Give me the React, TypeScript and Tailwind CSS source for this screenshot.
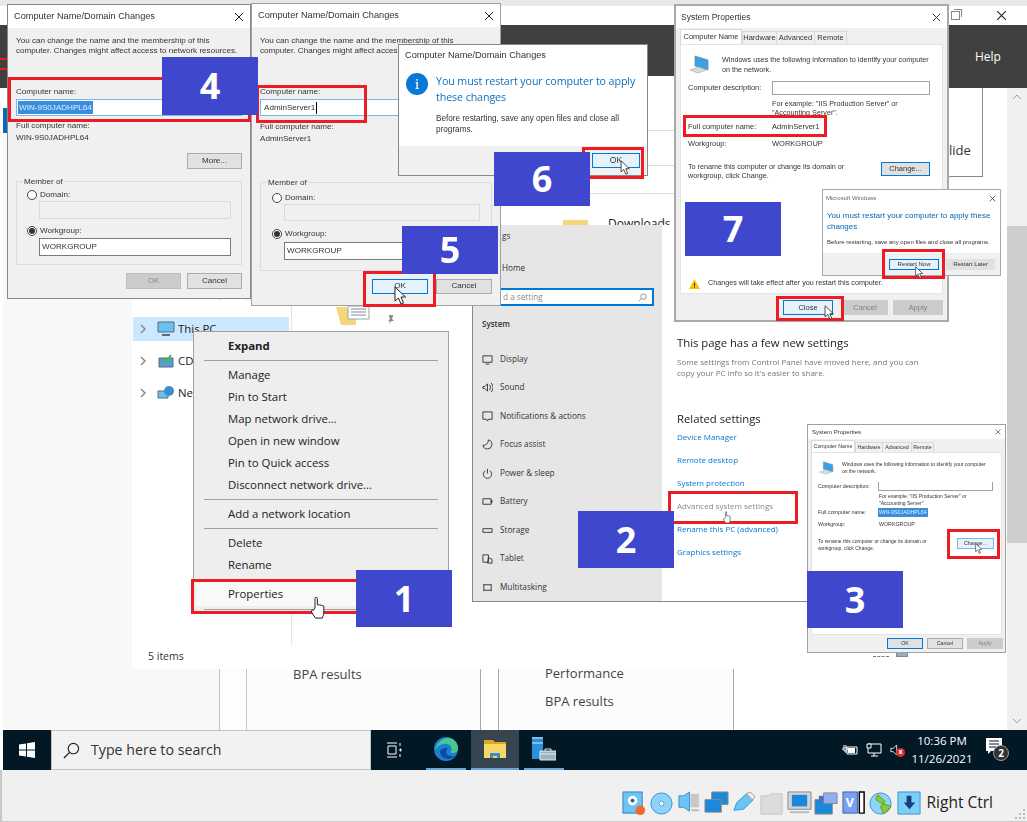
import React from "react";

const RED = "absolute border-[3px] border-[#ed1c24] z-20";
const DLG = "font-['Liberation_Sans',sans-serif] whitespace-nowrap blur-[0.3px]";

function Tag({ n, className }: { n: string; className: string }) {
  return (
    <div className={`absolute z-30 w-[96px] bg-[#3f48cc] flex items-center justify-center text-white font-bold text-[36px] ${className}`}>
      {n}
    </div>
  );
}

function Arrow({ className }: { className: string }) {
  return (
    <svg viewBox="0 0 12 19" className={`absolute z-40 ${className}`}>
      <path d="M1 1v14l3.5-3 2.5 6 2.5-1-2.5-6h4.5z" fill="#fff" stroke="#222" strokeWidth="1" />
    </svg>
  );
}

function Hand({ className }: { className: string }) {
  return (
    <svg viewBox="0 0 16 24" className={`absolute z-40 ${className}`}>
      <path d="M5 12V2.5a1.2 1.2 0 0 1 2.4 0V9l1-.2 1.5.2 1.5.3 2.4.8v6c0 2-1 5-1.5 6H5.5L1.5 16c-.6-1.5.5-2.5 1.8-1.5z" fill="#fff" stroke="#222" strokeWidth="1" />
    </svg>
  );
}

function Btn({ label, className }: { label: string; className: string }) {
  return <div className={`flex items-center justify-center border ${className}`}>{label}</div>;
}

function Radio({ on }: { on?: boolean }) {
  return (
    <span className="w-[10px] h-[10px] rounded-full border border-[#444] bg-white flex items-center justify-center shrink-0">
      {on && <span className="w-[6px] h-[6px] rounded-full bg-[#333]" />}
    </span>
  );
}

function CloseX({ className }: { className: string }) {
  return (
    <svg viewBox="0 0 10 10" className={className}>
      <path d="M1 1l8 8M9 1l-8 8" stroke="#222" strokeWidth="1" fill="none" />
    </svg>
  );
}

function ChangeDialog({ second }: { second?: boolean }) {
  const name = second ? "AdminServer1" : "WIN-9S0JADHPL64";
  return (
    <div
      className={
        second
          ? `absolute left-[251px] top-[3px] w-[250px] h-[303px] z-[11] bg-[#f0f0f0] border border-[#a0a0a0] text-[8.1px] text-[#333] flex flex-col ${DLG}`
          : `absolute left-[7px] top-[4px] w-[244px] h-[295px] z-10 bg-[#f0f0f0] border border-[#888] text-[8.1px] text-[#333] flex flex-col ${DLG}`
      }
    >
      <div className="h-[23px] bg-white flex items-center justify-between pl-[6px] pr-[6px] text-[9.2px] shrink-0">
        <span>Computer Name/Domain Changes</span>
        <CloseX className="w-[10px] h-[10px]" />
      </div>
      <div className="flex flex-col px-[8px] flex-1">
        <div className={second ? "mt-[9px] leading-[10px]" : "mt-[8px] leading-[10px]"}>
          You can change the name and the membership of this
          <br />
          computer. Changes might affect access to network resources.
        </div>
        <div className="mt-[30px] leading-[12px]">Computer name:</div>
        <div className="mt-[1px] h-[17px] bg-white border border-[#7eb4ea] flex items-center pl-[1px] shrink-0">
          {second ? (
            <span className="ml-[2px] pr-[1px] border-r border-black leading-[12px]">{name}</span>
          ) : (
            <span className="bg-[#3a8fdc] text-[#dfeeff] px-[1px] leading-[13px]">{name}</span>
          )}
        </div>
        <div className={second ? "mt-[5px] leading-[12px]" : "mt-[4px] leading-[12px]"}>Full computer name:</div>
        <div className="leading-[12px]">{name}</div>
        <Btn label="More..." className="mt-[9px] self-end w-[55px] h-[16px] bg-[#e1e1e1] border-[#adadad]" />
        <div
          className={
            second
              ? "relative mt-[12px] border border-[#dcdcdc] flex flex-col pl-[11px] pr-[11px] pt-[9px] pb-[10px]"
              : "relative mt-[12px] border border-[#dcdcdc] flex flex-col pl-[10px] pr-[10px] pt-[7px] pb-[8px]"
          }
        >
          <span className="absolute left-[6px] -top-[6px] bg-[#f0f0f0] px-[1px] leading-[12px]">Member of</span>
          <div className="flex items-center gap-[3px] h-[12px]">
            <Radio />
            <span>Domain:</span>
          </div>
          <div className={second ? "ml-[12px] h-[17px] bg-[#f0f0f0] border border-[#d9d9d9]" : "ml-[12px] h-[18px] bg-[#f0f0f0] border border-[#d9d9d9]"} />
          <div className={second ? "mt-[7px] flex items-center gap-[3px] h-[12px]" : "mt-[6px] flex items-center gap-[3px] h-[12px]"}>
            <Radio on />
            <span>Workgroup:</span>
          </div>
          <div className={second ? "ml-[12px] mt-[2px] h-[18px] bg-white border border-[#7a7a7a] flex items-center pl-[2px]" : "ml-[12px] mt-[1px] h-[18px] bg-white border border-[#7a7a7a] flex items-center pl-[2px]"}>
            WORKGROUP
          </div>
        </div>
        <div className={second ? "mt-[8px] flex justify-end gap-[8px]" : "mt-[8px] flex justify-end gap-[6px]"}>
          <Btn
            label="OK"
            className={second ? "w-[56px] h-[15px] bg-[#e5f1fb] border-[#0078d7]" : "w-[55px] h-[16px] bg-[#cccccc] border-[#bfbfbf] text-[#8a8a8a]"}
          />
          <Btn label="Cancel" className={second ? "w-[56px] h-[15px] bg-[#e1e1e1] border-[#adadad]" : "w-[55px] h-[16px] bg-[#e1e1e1] border-[#adadad]"} />
        </div>
      </div>
    </div>
  );
}

function PcIcon({ className }: { className: string }) {
  return (
    <svg viewBox="0 0 22 19" className={className}>
      <path d="M6 1l13 4v10L6 11z" fill="#3aa0e8" stroke="#7a8a96" strokeWidth=".8" />
      <path d="M1 15l9-3 7 3-8 3z" fill="#d8dde0" stroke="#9aa4aa" strokeWidth=".6" />
    </svg>
  );
}

function SystemPropsBig() {
  return (
    <div className={`absolute left-[674px] top-[4px] w-[275px] h-[318px] z-[12] bg-[#f0f0f0] border-2 border-[#a9a9a9] text-[7.5px] text-[#333] flex flex-col ${DLG}`}>
      <div className="h-[22px] bg-white flex items-center justify-between pl-[5px] pr-[6px] text-[8.5px] shrink-0">
        <span>System Properties</span>
        <CloseX className="w-[9px] h-[9px]" />
      </div>
      <div className="flex items-end pl-[4px] h-[16px] shrink-0">
        <div className="h-[15px] w-[62px] bg-white border border-b-0 border-[#d9d9d9] flex items-center justify-center">Computer Name</div>
        <div className="h-[13px] w-[35px] border border-b-0 border-[#d9d9d9] flex items-center justify-center">Hardware</div>
        <div className="h-[13px] w-[38px] border border-b-0 border-l-0 border-[#d9d9d9] flex items-center justify-center">Advanced</div>
        <div className="h-[13px] w-[32px] border border-b-0 border-l-0 border-[#d9d9d9] flex items-center justify-center">Remote</div>
      </div>
      <div className="mx-[4px] h-[250px] bg-white border border-[#e4e4e4] flex flex-col pl-[7px] pr-[12px] relative shrink-0">
        <div className="flex mt-[10px]">
          <PcIcon className="w-[22px] h-[19px] ml-[1px] mr-[11px] shrink-0" />
          <div className="leading-[9.5px] text-[7.2px]">
            Windows uses the following information to identify your computer
            <br />
            on the network.
          </div>
        </div>
        <div className="flex items-center mt-[7px]">
          <span className="w-[84px]">Computer description:</span>
          <div className="w-[158px] h-[14px] border border-[#a0a0a0]" />
        </div>
        <div className="ml-[84px] mt-[4px] leading-[9px] text-[7.2px] h-[18px]">
          For example: "IIS Production Server" or
          <br />
          "Accounting Server".
        </div>
        <div className="flex mt-[4px] leading-[12px]">
          <span className="w-[84px]">Full computer name:</span>
          <span>AdminServer1</span>
        </div>
        <div className="flex mt-[5px] leading-[12px]">
          <span className="w-[84px]">Workgroup:</span>
          <span>WORKGROUP</span>
        </div>
        <div className="flex justify-between mt-[12px]">
          <div className="leading-[9px] text-[7.2px]">
            To rename this computer or change its domain or
            <br />
            workgroup, click Change.
          </div>
          <Btn label="Change..." className="w-[49px] h-[14px] bg-[#e1e1e1] border-[#0078d7]" />
        </div>
        <div className="absolute left-[8px] bottom-[4px] flex items-center gap-[8px]">
          <svg viewBox="0 0 12 11" className="w-[11px] h-[10px]">
            <path d="M6 0l6 11H0z" fill="#f8c300" />
            <path d="M5.5 4h1v4h-1zM5.5 9h1v1h-1z" fill="#222" />
          </svg>
          <span className="text-[7.2px]">Changes will take effect after you restart this computer.</span>
        </div>
      </div>
      <div className="flex justify-end gap-[5px] mt-[6px] pr-[4px]">
        <Btn label="Close" className="w-[50px] h-[15px] mr-[4px] bg-[#e5f1fb] border-[#0078d7]" />
        <Btn label="Cancel" className="w-[46px] h-[15px] bg-[#cccccc] border-[#cccccc] text-[#808080]" />
        <Btn label="Apply" className="w-[50px] h-[15px] bg-[#cccccc] border-[#cccccc] text-[#808080]" />
      </div>
    </div>
  );
}

function RestartSmall() {
  return (
    <div className={`absolute left-[822px] top-[189px] w-[179px] h-[87px] z-[13] bg-white border border-[#a9a9a9] text-[6px] text-[#333] flex flex-col ${DLG}`}>
      <div className="flex justify-between items-center pl-[3px] pr-[4px] h-[16px] text-[6px] text-[#666] shrink-0">
        <span>Microsoft Windows</span>
        <CloseX className="w-[7px] h-[7px]" />
      </div>
      <div className="pl-[4px] text-[#0067b8] text-[8px] leading-[11px] mt-[4px]">
        You must restart your computer to apply these
        <br />
        changes
      </div>
      <div className="pl-[4px] mt-[6px] text-[6px] leading-[9px]">Before restarting, save any open files and close all programs.</div>
      <div className="mt-auto h-[22px] bg-[#f0f0f0] flex items-center justify-end gap-[7px] pr-[5px]">
        <Btn label="Restart Now" className="w-[50px] h-[11px] bg-[#e5f1fb] border-[#0078d7]" />
        <Btn label="Restart Later" className="w-[49px] h-[11px] bg-[#e1e1e1] border-[#e1e1e1]" />
      </div>
    </div>
  );
}

function MsgDialog() {
  return (
    <div className={`absolute left-[398px] top-[44px] w-[250px] h-[132px] z-[12] bg-[#f0f0f0] border border-[#888] flex flex-col text-[#333] ${DLG}`}>
      <div className="bg-white h-[101px] flex flex-col shrink-0">
        <div className="text-[9.2px] pl-[6px] pt-[4px] leading-[12px]">Computer Name/Domain Changes</div>
        <div className="flex mt-[8px] pl-[7px]">
          <div className="w-[22px] h-[22px] mt-[4px] rounded-full bg-[#0a78d7] flex items-center justify-center text-white text-[15px] font-serif shrink-0">i</div>
          <div className="ml-[8px] mt-[4px]">
            <div className="text-[#0e70c0] text-[10.7px] leading-[16px] font-['Open_Sans',sans-serif] tracking-[-0.1px]">
              You must restart your computer to apply
              <br />
              these changes
            </div>
            <div className="text-[8.2px] leading-[11px] mt-[8px]">
              Before restarting, save any open files and close all
              <br />
              programs.
            </div>
          </div>
        </div>
      </div>
      <div className="flex justify-end pr-[7px] mt-[7px]">
        <Btn label="OK" className="w-[48px] h-[15px] text-[8.5px] bg-[#e5f1fb] border-[#0078d7]" />
      </div>
    </div>
  );
}

const sideItems = ["Display", "Sound", "Notifications & actions", "Focus assist", "Power & sleep", "Battery", "Storage", "Tablet", "Multitasking"];

function SideGlyph({ i }: { i: number }) {
  const paths = [
    "M1 2h10v7H1zM4 11h4",
    "M1 5h2l3-3v8L3 7H1zM8 3a4 4 0 0 1 0 6M10 1a7 7 0 0 1 0 10",
    "M1 1h10v8H7l-1 2-1-2H1z",
    "M7 1a5 5 0 1 1-6 6c3 0 6-2 6-6z",
    "M6 1v5M3.5 3a4.5 4.5 0 1 0 5 0",
    "M1 3h9v6H1zM10 5h1v2h-1z",
    "M1 4h10v4H1z",
    "M1 2h6v8H1zM7 5l4 2v4H6z",
    "M2 2v8M10 2v8M2 3h8M2 9h8",
  ];
  return (
    <svg viewBox="0 0 12 12" className="w-[11px] h-[11px] shrink-0">
      <path d={paths[i]} fill="none" stroke="#333" strokeWidth="1" />
    </svg>
  );
}

function SettingsWindow() {
  return (
    <div className="absolute left-[472px] top-[225px] w-[336px] h-[377px] z-[5] bg-white border-b border-[#888] flex blur-[0.25px]">
      <div className="w-[190px] shrink-0 bg-[#e6e6e6] border-l border-[#888] flex flex-col text-[8.2px] text-[#333] overflow-hidden">
        <div className="pl-[29px] mt-[5px] leading-[12px]">gs</div>
        <div className="pl-[29px] mt-[20px] leading-[12px]">Home</div>
        <div className="mt-[14px] w-[181px] h-[18px] bg-white border-2 border-[#0078d7] border-l-0 flex items-center justify-between pl-[30px] pr-[5px] text-[#888] shrink-0">
          <span>d a setting</span>
          <svg viewBox="0 0 10 10" className="w-[9px] h-[9px]">
            <circle cx="6" cy="4" r="3" fill="none" stroke="#888" />
            <path d="M4 6L1 9" stroke="#888" />
          </svg>
        </div>
        <div className="pl-[9px] mt-[12px] leading-[12px] font-semibold text-[8px]">System</div>
        <div className="flex flex-col gap-[16.5px] mt-[23px]">
          {sideItems.map((s, i) => (
            <div key={s} className="flex items-center gap-[7px] pl-[9px] h-[12px]">
              <SideGlyph i={i} />
              <span>{s}</span>
            </div>
          ))}
        </div>
      </div>
      <div className="flex-1 pl-[15px] flex flex-col text-[8px]">
        <div className="mt-[109px] text-[11.3px] text-[#222] leading-[18px] whitespace-nowrap">This page has a few new settings</div>
        <div className="mt-[4px] text-[#767676] leading-[11px] whitespace-nowrap">
          Some settings from Control Panel have moved here, and you can
          <br />
          copy your PC info so it's easier to share.
        </div>
        <div className="mt-[32px] text-[11.3px] text-[#222] leading-[18px] whitespace-nowrap">Related settings</div>
        <div className="flex flex-col gap-[11px] mt-[3px] text-[#0078d4] whitespace-nowrap">
          <span className="leading-[12px]">Device Manager</span>
          <span className="leading-[12px]">Remote desktop</span>
          <span className="leading-[12px]">System protection</span>
          <span className="leading-[12px] text-[#8a8a8a]">Advanced system settings</span>
          <span className="leading-[12px]">Rename this PC (advanced)</span>
          <span className="leading-[12px]">Graphics settings</span>
        </div>
      </div>
    </div>
  );
}

function SystemPropsSmall() {
  return (
    <div className="absolute left-[807px] top-[424px] w-[199px] h-[229px] z-[8] bg-[#f0f0f0] border border-[#a0a0a0] text-[5.3px] text-[#333] flex flex-col font-['Liberation_Sans',sans-serif] whitespace-nowrap blur-[0.4px]">
      <div className="h-[14px] bg-white flex items-center justify-between pl-[4px] pr-[4px] text-[6px] shrink-0">
        <span>System Properties</span>
        <CloseX className="w-[6px] h-[6px]" />
      </div>
      <div className="flex items-end pl-[3px] h-[13px] shrink-0">
        <div className="h-[12px] w-[44px] bg-white border border-b-0 border-[#d9d9d9] flex items-center justify-center">Computer Name</div>
        <div className="h-[10px] w-[28px] border border-b-0 border-[#d9d9d9] flex items-center justify-center">Hardware</div>
        <div className="h-[10px] w-[29px] border border-b-0 border-l-0 border-[#d9d9d9] flex items-center justify-center">Advanced</div>
        <div className="h-[10px] w-[22px] border border-b-0 border-l-0 border-[#d9d9d9] flex items-center justify-center">Remote</div>
      </div>
      <div className="mx-[3px] h-[183px] bg-white border border-[#e4e4e4] flex flex-col pl-[6px] pr-[7px] shrink-0">
        <div className="flex mt-[8px]">
          <PcIcon className="w-[16px] h-[14px] mr-[7px] ml-[1px] shrink-0" />
          <div className="leading-[7px] text-[5px]">
            Windows uses the following information to identify your computer
            <br />
            on the network.
          </div>
        </div>
        <div className="flex items-center mt-[7px]">
          <span className="w-[60px]">Computer description:</span>
          <div className="w-[115px] h-[9px] border border-[#a0a0a0] border-t-0" />
        </div>
        <div className="ml-[61px] mt-[2px] leading-[7px] text-[5px] h-[14px]">
          For example: "IIS Production Server" or
          <br />
          "Accounting Server".
        </div>
        <div className="flex mt-[1px] leading-[9px]">
          <span className="w-[60px]">Full computer name:</span>
          <span className="bg-[#3a8fdc] text-[#dfeeff] px-[1px]">WIN-9S0JADHPL64</span>
        </div>
        <div className="flex mt-[3px] leading-[9px]">
          <span className="w-[61px]">Workgroup:</span>
          <span>WORKGROUP</span>
        </div>
        <div className="flex justify-between mt-[9px]">
          <div className="leading-[7px] text-[5px]">
            To rename this computer or change its domain or
            <br />
            workgroup, click Change.
          </div>
          <Btn label="Change..." className="w-[37px] h-[11px] bg-[#e5f1fb] border-[#7eb4ea]" />
        </div>
      </div>
      <div className="flex justify-end gap-[4px] mt-[3px] pr-[2px]">
        <Btn label="OK" className="w-[36px] h-[11px] bg-[#e1e1e1] border-[#0078d7]" />
        <Btn label="Cancel" className="w-[36px] h-[11px] bg-[#e1e1e1] border-[#adadad]" />
        <Btn label="Apply" className="w-[36px] h-[11px] bg-[#cccccc] border-[#cccccc] text-[#808080]" />
      </div>
    </div>
  );
}

const menuGroups = [
  ["Manage", "Pin to Start", "Map network drive...", "Open in new window", "Pin to Quick access", "Disconnect network drive..."],
  ["Add a network location"],
  ["Delete", "Rename"],
];

function ContextMenu() {
  return (
    <div className="absolute left-[193px] top-[331px] w-[256px] h-[281px] z-[6] bg-[#eeeeee] border border-[#a0a0a0] flex flex-col text-[11.4px] text-[#222]">
      <div className="h-[28px] pl-[34px] flex items-center font-bold">Expand</div>
      {menuGroups.map((g) => (
        <div key={g[0]} className="mx-[10px] border-t border-[#a0a0a0] py-[3px] pl-[24px]">
          {g.map((s) => (
            <div key={s} className="h-[22px] flex items-center whitespace-nowrap">
              {s}
            </div>
          ))}
        </div>
      ))}
      <div className="mt-[2px] mx-[2px] h-[25px] bg-[#f9f9f9] pl-[32px] flex items-center">Properties</div>
      <div className="mx-[10px] mt-[3px] border-t border-[#a0a0a0]" />
    </div>
  );
}

function TreeRow({ label, active, children }: { label: string; active?: boolean; children: React.ReactNode }) {
  return (
    <div className={active ? "h-[24px] w-[156px] bg-[#cce8ff] flex items-center pl-[7px]" : "h-[24px] w-[156px] flex items-center pl-[7px]"}>
      <svg viewBox="0 0 6 10" className="w-[6px] h-[10px] mr-[11px]">
        <path d="M1 1l4 4-4 4" fill="none" stroke="#8a8a8a" strokeWidth="1.5" />
      </svg>
      {children}
      <span className="ml-[3px] text-[11.4px] text-[#222]">{label}</span>
    </div>
  );
}

function ExplorerWindow() {
  return (
    <div className="absolute left-[132px] top-[300px] w-[786px] h-[369px] z-[3] bg-white">
      <div className="flex h-[345px]">
        <div className="w-[160px] pt-[17px] pl-[1px] flex flex-col gap-[8px] border-r border-[#e4e4e4]">
          <TreeRow label="This PC" active>
            <svg viewBox="0 0 18 16" className="w-[18px] h-[16px]">
              <path d="M1 1h16v10H1z" fill="#6cc0f0" stroke="#5a6a78" />
              <path d="M5 14h8" stroke="#5a6a78" strokeWidth="2" />
            </svg>
          </TreeRow>
          <TreeRow label="CD">
            <svg viewBox="0 0 18 16" className="w-[18px] h-[16px]">
              <path d="M2 5h14v9H2z" fill="#5a9bd5" stroke="#5a6a78" />
              <path d="M6 6l3 3 5-7" fill="none" stroke="#3cc03c" strokeWidth="2" />
            </svg>
          </TreeRow>
          <TreeRow label="Ne">
            <svg viewBox="0 0 18 16" className="w-[18px] h-[16px]">
              <path d="M1 6h10v7H1z" fill="#6cc0f0" stroke="#5a6a78" />
              <circle cx="12" cy="6" r="5" fill="#3d8ecc" />
            </svg>
          </TreeRow>
        </div>
        <div className="flex-1 pl-[44px] pt-[6px] flex items-start gap-[15px]">
          <svg viewBox="0 0 35 19" className="w-[35px] h-[19px]">
            <path d="M0 1h10l2 2h8v16H5z" fill="#f5d67a" />
            <path d="M12 0h21v13H12z" fill="#fff" stroke="#9aa4aa" />
            <path d="M15 3h15M15 6h15M15 9h15" stroke="#7a8a96" />
          </svg>
          <svg viewBox="0 0 10 10" className="w-[10px] h-[10px] mt-[8px]">
            <path d="M3 1h4v1l-1 3 2 2H5.5L3 10l1-3H2l2-2-1-3z" fill="#8a8a8a" />
          </svg>
        </div>
      </div>
      <div className="h-[24px] flex items-center justify-between pl-[16px] pr-[10px]">
        <span className="text-[10.5px] text-[#333]">5 items</span>
        <div className="flex gap-[7px] items-start h-[16px]">
          <div className="w-[16px] h-[8px] border-y border-dashed border-[#777]" />
          <div className="w-[12px] h-[8px] border border-[#888] bg-[#9ab]" />
        </div>
      </div>
    </div>
  );
}

function Backdrop() {
  return (
    <>
      <div className="h-[6px] bg-[#e8e8e8]" />
      <div className="h-[19px] bg-white flex justify-end items-center pr-[20px] gap-[36px]">
        <div className="relative w-[9px] h-[9px] border border-[#888] bg-white">
          <div className="absolute left-[2px] -top-[3px] w-[8px] h-[8px] border-t border-r border-[#888]" />
        </div>
        <CloseX className="w-[11px] h-[11px]" />
      </div>
      <div className="h-[51px] bg-[#404040]" />
      <div className="absolute left-0 top-[25px] w-[8px] h-[63px] bg-[#404040]" />
      <div className="absolute left-[948px] right-0 top-[25px] h-[63px] bg-[#404040] text-white text-[12px] pl-[27px] pt-[23px] leading-[18px]">Help</div>
      <div className="absolute left-0 top-[58px] w-[8px] h-[12px] border-y-2 border-[#ed1c24] z-[1]" />
      <div className="absolute left-[3px] top-[108px] w-[5px] h-[25px] bg-[#0a6cb0]" />
      <div className="absolute left-[3px] top-[133px] w-[216px] h-[597px] bg-[#f8f8f8]" />
      <div className="absolute left-[219px] top-[88px] w-[28px] h-[642px] bg-[#fdfdfd] border-x border-[#c4c4c4]" />
      <div className="absolute left-[247px] top-[669px] w-[234px] h-[61px] pl-[46px] text-[13px] text-[#444] leading-[10px] bg-[#fcfcfc] border-r border-[#a8a8a8]">BPA results</div>
      <div className="absolute left-[481px] top-[669px] w-[18px] h-[61px] bg-white border-r border-[#a8a8a8]" />
      <div className="absolute left-[499px] top-[664px] w-[235px] h-[66px] pl-[46px] text-[13px] text-[#444] leading-[28px] flex flex-col bg-[#fcfcfc] border-r border-[#a8a8a8]">
        <span className="h-[28px] -mt-[5px]">Performance</span>
        <span>BPA results</span>
      </div>
      <div className="absolute left-[640px] top-[130px] w-[34px] h-[36px] border-y border-[#dcdcdc]" />
      <div className="absolute left-[590px] top-[193px] w-[84px] h-[1px] bg-[#dcdcdc]" />
      <div className="absolute left-[563px] top-[220px] w-[25px] h-[5px] bg-[#f5d67a]" />
      <div className="absolute left-[608px] top-[216px] text-[12px] text-[#222] leading-[16px] h-[9px] overflow-hidden">Downloads</div>
      <div className="absolute left-[949px] top-[88px] w-[34px] h-[89px] bg-white border-r border-b border-[#8a8a8a] text-[13px] text-[#333] leading-[18px] pt-[53px]">lide</div>
      <div className="absolute left-[1007px] top-[88px] w-[20px] h-[642px] bg-[#f0f0f0] flex flex-col items-center">
        <svg viewBox="0 0 10 6" className="w-[10px] h-[6px] mt-[6px]">
          <path d="M1 5l4-4 4 4" fill="none" stroke="#a0a0a0" />
        </svg>
        <div className="w-full h-[317px] bg-[#cdcdcd] mt-[126px]" />
        <svg viewBox="0 0 10 6" className="w-[10px] h-[6px] mt-auto mb-[6px]">
          <path d="M1 1l4 4 4-4" fill="none" stroke="#a0a0a0" />
        </svg>
      </div>
    </>
  );
}

function Taskbar() {
  return (
    <div className="ml-[3px] h-[40px] bg-[#021825] flex items-stretch text-white shrink-0">
      <div className="w-[48px] flex items-center justify-center">
        <svg viewBox="0 0 16 16" className="w-[16px] h-[16px]">
          <path d="M0 2.5l7-1v6H0zM8 1.3L16 0v7.5H8zM0 8.5h7v6l-7-1zM8 8.5h8V16l-8-1.3z" fill="#fff" />
        </svg>
      </div>
      <div className="w-[320px] bg-[#f2f2f2] border border-[#c4c4c4] flex items-center pl-[11px] text-[#333] text-[14.2px]">
        <svg viewBox="0 0 18 18" className="w-[17px] h-[17px] mr-[11px]">
          <circle cx="11" cy="7" r="5.5" fill="none" stroke="#222" strokeWidth="1.2" />
          <path d="M7 11l-6 6" stroke="#222" strokeWidth="1.4" />
        </svg>
        Type here to search
      </div>
      <div className="w-[46px] flex items-center justify-center">
        <svg viewBox="0 0 16 16" className="w-[16px] h-[16px]">
          <path d="M1 1h10M1 15h10M2 4h8v8H2zM14 1v3M14 7h1v2h-1zM14 12v3" fill="none" stroke="#fff" />
        </svg>
      </div>
      <div className="w-[40px] ml-[9px] border-b-2 border-[#63a8df] flex items-center justify-center">
        <svg viewBox="0 0 24 24" className="w-[24px] h-[24px]">
          <circle cx="12" cy="12" r="12" fill="#1a7fd0" />
          <path d="M1 13C3 5 9 1 14 1c5 0 10 4 10 10 0 3-2 5-5 5-2 0-3-1-3-1 2-1 2-3 1-5-1-3-5-4-8-3-4 1-6 3-8 6z" fill="#49c78c" />
          <path d="M6 15c0 4 4 7 8 7 3 0 5-1 7-3-4 1-9-1-9-4 0-2 1-3 2-4-4 0-8 1-8 4z" fill="#0c4d9e" />
        </svg>
      </div>
      <div className="w-[48px] ml-[5px] bg-[#36454f] border-b-2 border-[#63a8df] flex items-center justify-center">
        <svg viewBox="0 0 22 18" className="w-[22px] h-[18px]">
          <path d="M0 0h9l2 2h11v3H0z" fill="#dba81e" />
          <path d="M0 4h22v14H0z" fill="#f7d768" />
          <path d="M6 13h10v5h-3v-2H9v2H6z" fill="#3a8ed0" />
        </svg>
      </div>
      <div className="w-[40px] ml-[5px] border-b-2 border-[#63a8df] flex items-center justify-center">
        <svg viewBox="0 0 24 24" className="w-[24px] h-[24px]">
          <path d="M0 0h11v22H0z" fill="#2c8fde" />
          <path d="M0 6h11M0 1h11" stroke="#cfe6f8" />
          <path d="M8 14h16v9H8z" fill="#9db4c0" stroke="#e0e8ee" />
          <path d="M8 17h16M13 14v-2h6v2" stroke="#e0e8ee" fill="none" />
        </svg>
      </div>
      <div className="flex-1 flex items-center justify-end pr-[17px]">
        <svg viewBox="0 0 16 12" className="w-[16px] h-[12px]">
          <path d="M5 3h10v7H5zM2 1v3M4 1v3M1 4h4v2H1zM3 6v2h2" fill="none" stroke="#fff" />
          <path d="M6 4h7v5H6z" fill="#fff" />
        </svg>
        <svg viewBox="0 0 16 14" className="w-[16px] h-[14px] ml-[8px]">
          <path d="M2 1h13v9H2zM8 10v3M5 13h7" fill="none" stroke="#fff" />
          <path d="M1 1h4v4H1z" fill="#021825" stroke="#fff" />
        </svg>
        <div className="relative w-[17px] h-[14px] ml-[8px]">
          <svg viewBox="0 0 12 14" className="w-[10px] h-[14px]">
            <path d="M1 5h3l4-4v12L4 9H1z" fill="none" stroke="#fff" />
          </svg>
          <span className="absolute left-[6px] top-[5px] w-[9px] h-[9px] rounded-full bg-[#d92b2b] text-[7px] font-bold leading-[8px] text-center">x</span>
        </div>
        <div className="w-[70px] mr-[9px] flex flex-col items-center text-[11.5px] leading-[18px]">
          <span>10:36 PM</span>
          <span>11/26/2021</span>
        </div>
        <div className="relative w-[24px] h-[24px] mt-[-2px]">
          <svg viewBox="0 0 16 16" className="w-[16px] h-[16px] absolute left-[0px] top-[1px]">
            <path d="M0 0h16v13H5l-3 3v-3H0z" fill="#fff" />
            <path d="M3 3h10M3 6h10M3 9h7" stroke="#021825" />
          </svg>
          <span className="absolute left-[7px] top-[8px] w-[16px] h-[16px] rounded-full bg-[#333] border border-[#999] text-[10px] font-bold leading-[14px] text-center">2</span>
        </div>
      </div>
    </div>
  );
}

function VBoxIcon({ i }: { i: number }) {
  const shapes: React.ReactNode[] = [
    <>
      <path d="M0 0h20v22H0z" fill="#6cc4f4" stroke="#2d7fc0" />
      <circle cx="10" cy="9" r="5" fill="#fff" />
      <circle cx="10" cy="9" r="2" fill="#1e5c9c" />
      <circle cx="18" cy="19" r="5" fill="#ee6a30" />
    </>,
    <>
      <circle cx="12" cy="12" r="11" fill="#8ed4fa" stroke="#3a92d0" />
      <circle cx="12" cy="12" r="2.5" fill="#fff" stroke="#5a9ccc" />
    </>,
    <>
      <path d="M1 4h5l6-4v20l-6-4H1z" fill="#6cc4f4" stroke="#3a92d0" />
      <path d="M13 2h9v14h-9z" fill="#c8c8c8" />
      <path d="M14 19h8" stroke="#bbb" strokeWidth="2" />
    </>,
    <>
      <path d="M7 0h17v13H7z" fill="#1b88dc" stroke="#888" />
      <path d="M0 8h17v13H0z" fill="#1b88dc" stroke="#888" />
    </>,
    <>
      <path d="M1 19l3-8 10-9 7 6-10 10z" fill="#6cc4f4" stroke="#3a92d0" />
      <path d="M14 2l4-2 5 5-3 3z" fill="#eee" stroke="#999" />
    </>,
    <path d="M1 4h8l2-2h12v21H1z" fill="#dcdcdc" stroke="#c4c4c4" />,
    <>
      <path d="M0 0h24v18H0z" fill="#d4d4d4" stroke="#888" />
      <path d="M4 3h16v12H4z" fill="#1b88dc" />
      <path d="M2 21h20" stroke="#bbb" strokeWidth="2" />
    </>,
    <>
      <path d="M0 8h18v15H0z" fill="#1b88dc" stroke="#888" />
      <path d="M9 1h14v11H9z" fill="#8eb0f0" stroke="#888" />
      <path d="M4 4h5v6H4z" fill="#5070c0" />
    </>,
    <>
      <path d="M0 0h15v22H0z" fill="#7aa0f0" stroke="#3a60b0" />
      <text x="3" y="16" fontSize="13" fontWeight="700" fill="#fff">V</text>
      <path d="M17 0h5v22h-5z" fill="#fff" stroke="#000" strokeWidth="1.5" />
    </>,
    <>
      <circle cx="11" cy="12" r="11" fill="#8ed4fa" stroke="#3a92d0" />
      <path d="M8 3l8 7-3 2 9 3-8 8-3-8 3-2-8-5z" fill="#8ccc2c" stroke="#5a9c10" />
    </>,
    <>
      <path d="M0 0h23v23H0z" fill="#7cd0f8" stroke="#3a92d0" />
      <path d="M9 4h5v7h4l-6 7-6-7h3z" fill="#1a3f7c" />
    </>,
  ];
  return (
    <svg viewBox="-1 -1 26 26" className="w-[25px] h-[25px] shrink-0">
      {shapes[i]}
    </svg>
  );
}

function StatusBar() {
  return (
    <div className="flex-1 bg-[#f0f0f0] border-l-2 border-b border-[#c8c8c8] relative flex items-center justify-end pt-[15px] pr-[34px]">
      <div className="flex items-center gap-[2.5px]">
        {[0, 1, 2, 3, 4, 5, 6, 7, 8, 9, 10].map((i) => (
          <VBoxIcon key={i} i={i} />
        ))}
      </div>
      <span className="ml-[5px] text-[15.5px] text-[#222] whitespace-nowrap">Right Ctrl</span>
      <div className="absolute right-[2px] bottom-[2px] grid grid-cols-3 gap-[2px] w-[10px]">
        {[0, 1, 2, 3, 4, 5, 6, 7, 8].map((i) => (
          <div key={i} className={i === 0 || i === 1 || i === 3 ? "w-[2px] h-[2px]" : "w-[2px] h-[2px] bg-[#bbb]"} />
        ))}
      </div>
    </div>
  );
}

export default function App() {
  return (
    <div className="w-[1027px] h-[822px] overflow-hidden flex flex-col bg-white font-['Open_Sans','Noto_Sans',sans-serif]">
      <div className="relative h-[730px] shrink-0 bg-white">
        <Backdrop />
        <ExplorerWindow />
        <SettingsWindow />
        <ContextMenu />
        <SystemPropsSmall />
        <ChangeDialog />
        <ChangeDialog second />
        <MsgDialog />
        <SystemPropsBig />
        <RestartSmall />

        <div className={`${RED} left-[8px] top-[77px] w-[243px] h-[45px]`} />
        <div className={`${RED} left-[256px] top-[85px] w-[111px] h-[38px]`} />
        <div className={`${RED} left-[363px] top-[271px] w-[73px] h-[36px]`} />
        <div className={`${RED} left-[582px] top-[147px] w-[62px] h-[32px]`} />
        <div className={`${RED} left-[683px] top-[115px] w-[144px] h-[22px]`} />
        <div className={`${RED} left-[776px] top-[296px] w-[68px] h-[25px]`} />
        <div className={`${RED} left-[882px] top-[249px] w-[63px] h-[30px]`} />
        <div className={`${RED} left-[668px] top-[491px] w-[130px] h-[33px]`} />
        <div className={`${RED} left-[947px] top-[529px] w-[53px] h-[30px]`} />
        <div className={`${RED} left-[191px] top-[579px] w-[261px] h-[35px]`} />

        <Tag n="1" className="left-[356px] top-[570px] h-[57px]" />
        <Tag n="2" className="left-[578px] top-[511px] h-[57px]" />
        <Tag n="3" className="left-[807px] top-[571px] h-[57px]" />
        <Tag n="4" className="left-[162px] top-[57px] h-[58px]" />
        <Tag n="5" className="left-[402px] top-[226px] h-[48px]" />
        <Tag n="6" className="left-[494px] top-[152px] h-[54px]" />
        <Tag n="7" className="left-[685px] top-[202px] h-[54px]" />

        <Arrow className="left-[394px] top-[286px] w-[12px] h-[19px]" />
        <Arrow className="left-[620px] top-[160px] w-[10px] h-[15px]" />
        <Arrow className="left-[824px] top-[305px] w-[10px] h-[15px]" />
        <Arrow className="left-[915px] top-[266px] w-[8px] h-[13px]" />
        <Arrow className="left-[975px] top-[543px] w-[7px] h-[11px]" />
        <Hand className="left-[310px] top-[596px] w-[16px] h-[24px]" />
        <Hand className="left-[722px] top-[511px] w-[10px] h-[13px]" />
      </div>
      <Taskbar />
      <StatusBar />
    </div>
  );
}
